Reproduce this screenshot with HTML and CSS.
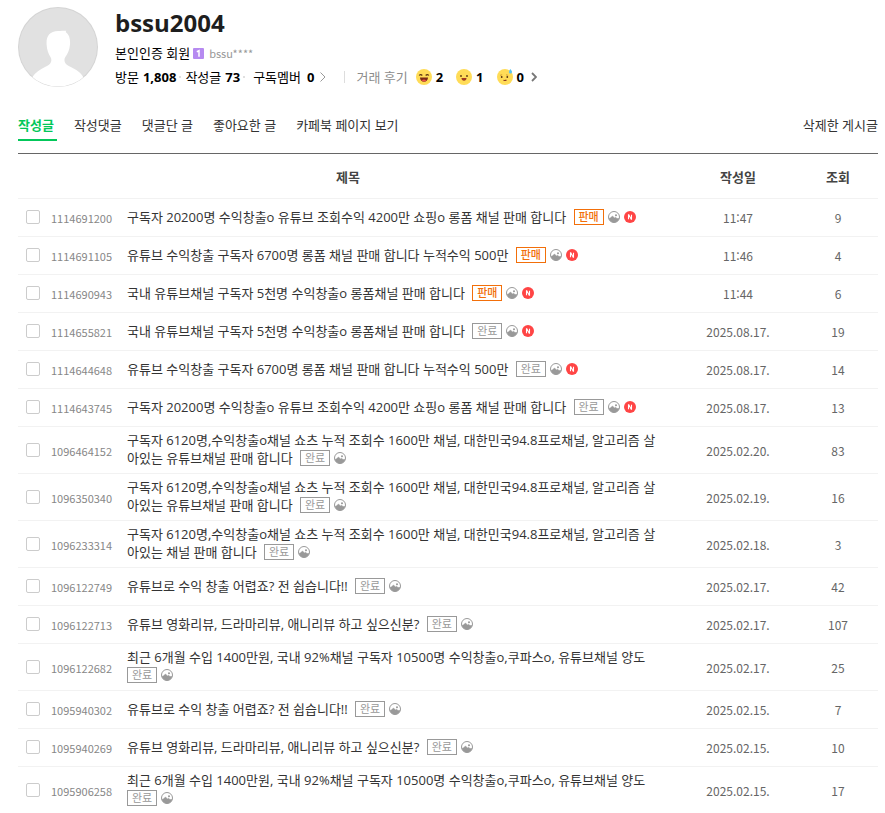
FILE: index.html
```html
<!DOCTYPE html>
<html lang="ko">
<head>
    <meta charset="UTF-8">
    <meta name="viewport" content="width=device-width, initial-scale=1.0">
    <title>bssu2004</title>
    <link rel="stylesheet" href="styles.css">
</head>
<body>
    <!-- 아이콘 -->
    <svg class="icon-defs" width="0" height="0" aria-hidden="true">
        <symbol id="icon-image" viewBox="0 0 12 12">
            <circle cx="6" cy="6" r="5.5" fill="#fff" stroke="#999"/>
            <path d="M1 7.500 2.500 6.800 4.500 5 6.500 7 7.500 6.300 9 7.500 11 7.500A5.200 5.200 0 0 1 1 7.500z" fill="#999" stroke="#999" stroke-width=".5"/>
            <circle cx="8" cy="4.200" r="1" fill="#999"/>
        </symbol>
        <symbol id="icon-new" viewBox="0 0 12 12">
            <circle cx="6" cy="6" r="6" fill="#ff4545"/>
            <path d="M4.500 8.200V3.800h.3L7.200 8.200h.3V3.800" fill="none" stroke="#fff" stroke-width="1.100"/>
        </symbol>
    </svg>

    <div class="container">
        <header class="profile">
            <svg class="avatar" viewBox="0 0 80 80" role="img" aria-label="프로필">
                <defs><clipPath id="avatar-clip"><circle cx="40" cy="40" r="39.5"/></clipPath></defs>
                <circle cx="40" cy="40" r="40" fill="#d4d4d4"/>
                <circle cx="40" cy="40" r="39" fill="#e1e1e1"/>
                <path clip-path="url(#avatar-clip)" fill="#fff" d="M40 24c3.500 0 6-.3 8.200-.2l-.5 1.200c3.600 2.500 4.700 7 4.300 12.500-.4 5-2.200 9.500-4.800 12.800-.8 1.200-1 3.200-.4 4.700 1 2.500 3.200 3.600 6 5 5 2.400 10 5.200 12.800 10.500V81H14V70.500c3.500-5.300 8-8 13-10.500 2.800-1.400 5-2.500 6-5 .6-1.500.4-3.500-.4-4.700-2.300-3.300-3.700-7.800-4-12.800C28 29.500 31.500 24.300 40 24z"/>
            </svg>
            <div class="profile-info">
                <h1>bssu2004</h1>
                <div class="member">
                    <span>본인인증 회원</span>
                    <svg class="level" viewBox="0 0 11 11" aria-hidden="true">
                        <rect width="11" height="11" rx="1" fill="#b68af0"/>
                        <path d="M3.800 3.700 6 2.700v6" fill="none" stroke="#fff" stroke-width="1.500"/>
                    </svg>
                    <span class="member-id">bssu****</span>
                </div>
                <div class="stats">
                    <span class="stat">방문 <strong>1,808</strong></span>
                    <span class="dot"></span>
                    <span class="stat">작성글 <strong>73</strong></span>
                    <span class="dot"></span>
                    <a href="#" class="stat subscribe">구독멤버 <strong>0</strong>
                        <svg width="6" height="10" viewBox="0 0 6 10" aria-hidden="true"><path d="M.5.500 5 5 .5 9.500" fill="none" stroke="#999"/></svg>
                    </a>
                    <a href="#" class="review">
                        <span>거래 후기</span>
                        <span class="face">
                            <svg viewBox="0 0 16 16" aria-hidden="true">
                                <circle cx="8" cy="8" r="8" fill="#ffdc57"/>
                                <path d="M3.200 6.500Q4.700 4.600 6.300 6.500M9.700 6.500Q11.300 4.600 12.800 6.500" fill="none" stroke="#5b3413" stroke-width="1.200"/>
                                <path d="M4 8.500h8c0 2.500-1.600 4.200-4 4.200S4 11 4 8.500z" fill="#7a2a16"/>
                                <path d="M5.700 11.300q2.300-1.400 4.600 0-1 1.300-2.300 1.300t-2.300-1.300z" fill="#f0524b"/>
                            </svg>
                            <strong>2</strong>
                        </span>
                        <span class="face">
                            <svg viewBox="0 0 16 16" aria-hidden="true">
                                <circle cx="8" cy="8" r="8" fill="#ffdc57"/>
                                <circle cx="5" cy="7" r=".9" fill="#5b3413"/>
                                <circle cx="11" cy="7" r=".9" fill="#5b3413"/>
                                <path d="M5.500 8.900h5c0 1.800-1 2.800-2.500 2.800S5.500 10.700 5.500 8.900z" fill="#a03a22"/>
                            </svg>
                            <strong>1</strong>
                        </span>
                        <span class="face">
                            <svg viewBox="0 0 16 16" aria-hidden="true">
                                <circle cx="8" cy="8" r="8" fill="#ffdc57"/>
                                <path d="M3 6.300 5.200 5.800M9 5.800l2.200.5" stroke="#c89328" stroke-width=".8"/>
                                <circle cx="4.700" cy="8" r=".9" fill="#5b3413"/>
                                <circle cx="10.300" cy="8" r=".9" fill="#5b3413"/>
                                <path d="M6.500 11.300q1.500.500 3-.3" fill="none" stroke="#8d3a20" stroke-width="1.200"/>
                                <path d="M13.300 0q2.400 2.400 1.400 3.900-1.200 1.100-2.600 0Q11.300 2.500 13.300 0z" fill="#57c4f5"/>
                            </svg>
                            <strong>0</strong>
                        </span>
                        <svg width="6" height="10" viewBox="0 0 6 10" aria-hidden="true"><path d="M1 1l4 4-4 4" fill="none" stroke="#777" stroke-width="1.800"/></svg>
                    </a>
                </div>
            </div>
        </header>

        <nav class="tabs">
            <a href="#" class="tab active">작성글</a>
            <a href="#" class="tab">작성댓글</a>
            <a href="#" class="tab">댓글단 글</a>
            <a href="#" class="tab">좋아요한 글</a>
            <a href="#" class="tab">카페북 페이지 보기</a>
            <a href="#" class="deleted">삭제한 게시글</a>
        </nav>

        <table class="articles">
            <colgroup>
                <col class="col-id">
                <col>
                <col class="col-date">
                <col class="col-view">
            </colgroup>
            <thead>
                <tr>
                    <th colspan="2" scope="col">제목</th>
                    <th scope="col">작성일</th>
                    <th scope="col">조회</th>
                </tr>
            </thead>
            <tbody>
                <tr>
                    <td><div class="check"><input type="checkbox" id="a1"><label for="a1">1114691200</label></div></td>
                    <td class="title"><a href="#">구독자 20200명 수익창출o 유튜브 조회수익 4200만 쇼핑o 롱폼 채널 판매 합니다</a> <span class="marks"><span class="badge sale">판매</span><svg class="icon"><use href="#icon-image"/></svg><svg class="icon"><use href="#icon-new"/></svg></span></td>
                    <td>11:47</td>
                    <td>9</td>
                </tr>
                <tr>
                    <td><div class="check"><input type="checkbox" id="a2"><label for="a2">1114691105</label></div></td>
                    <td class="title"><a href="#">유튜브 수익창출 구독자 6700명 롱폼 채널 판매 합니다 누적수익 500만</a> <span class="marks"><span class="badge sale">판매</span><svg class="icon"><use href="#icon-image"/></svg><svg class="icon"><use href="#icon-new"/></svg></span></td>
                    <td>11:46</td>
                    <td>4</td>
                </tr>
                <tr>
                    <td><div class="check"><input type="checkbox" id="a3"><label for="a3">1114690943</label></div></td>
                    <td class="title"><a href="#">국내 유튜브채널 구독자 5천명 수익창출o 롱폼채널 판매 합니다</a> <span class="marks"><span class="badge sale">판매</span><svg class="icon"><use href="#icon-image"/></svg><svg class="icon"><use href="#icon-new"/></svg></span></td>
                    <td>11:44</td>
                    <td>6</td>
                </tr>
                <tr>
                    <td><div class="check"><input type="checkbox" id="a4"><label for="a4">1114655821</label></div></td>
                    <td class="title"><a href="#">국내 유튜브채널 구독자 5천명 수익창출o 롱폼채널 판매 합니다</a> <span class="marks"><span class="badge">완료</span><svg class="icon"><use href="#icon-image"/></svg><svg class="icon"><use href="#icon-new"/></svg></span></td>
                    <td>2025.08.17.</td>
                    <td>19</td>
                </tr>
                <tr>
                    <td><div class="check"><input type="checkbox" id="a5"><label for="a5">1114644648</label></div></td>
                    <td class="title"><a href="#">유튜브 수익창출 구독자 6700명 롱폼 채널 판매 합니다 누적수익 500만</a> <span class="marks"><span class="badge">완료</span><svg class="icon"><use href="#icon-image"/></svg><svg class="icon"><use href="#icon-new"/></svg></span></td>
                    <td>2025.08.17.</td>
                    <td>14</td>
                </tr>
                <tr>
                    <td><div class="check"><input type="checkbox" id="a6"><label for="a6">1114643745</label></div></td>
                    <td class="title"><a href="#">구독자 20200명 수익창출o 유튜브 조회수익 4200만 쇼핑o 롱폼 채널 판매 합니다</a> <span class="marks"><span class="badge">완료</span><svg class="icon"><use href="#icon-image"/></svg><svg class="icon"><use href="#icon-new"/></svg></span></td>
                    <td>2025.08.17.</td>
                    <td>13</td>
                </tr>
                <tr>
                    <td><div class="check"><input type="checkbox" id="a7"><label for="a7">1096464152</label></div></td>
                    <td class="title"><a href="#">구독자 6120명,수익창출o채널 쇼츠 누적 조회수 1600만 채널, 대한민국94.8프로채널, 알고리즘 살아있는 유튜브채널 판매 합니다</a> <span class="marks"><span class="badge">완료</span><svg class="icon"><use href="#icon-image"/></svg></span></td>
                    <td>2025.02.20.</td>
                    <td>83</td>
                </tr>
                <tr>
                    <td><div class="check"><input type="checkbox" id="a8"><label for="a8">1096350340</label></div></td>
                    <td class="title"><a href="#">구독자 6120명,수익창출o채널 쇼츠 누적 조회수 1600만 채널, 대한민국94.8프로채널, 알고리즘 살아있는 유튜브채널 판매 합니다</a> <span class="marks"><span class="badge">완료</span><svg class="icon"><use href="#icon-image"/></svg></span></td>
                    <td>2025.02.19.</td>
                    <td>16</td>
                </tr>
                <tr>
                    <td><div class="check"><input type="checkbox" id="a9"><label for="a9">1096233314</label></div></td>
                    <td class="title"><a href="#">구독자 6120명,수익창출o채널 쇼츠 누적 조회수 1600만 채널, 대한민국94.8프로채널, 알고리즘 살아있는 채널 판매 합니다</a> <span class="marks"><span class="badge">완료</span><svg class="icon"><use href="#icon-image"/></svg></span></td>
                    <td>2025.02.18.</td>
                    <td>3</td>
                </tr>
                <tr>
                    <td><div class="check"><input type="checkbox" id="a10"><label for="a10">1096122749</label></div></td>
                    <td class="title"><a href="#">유튜브로 수익 창출 어렵죠? 전 쉽습니다!!</a> <span class="marks"><span class="badge">완료</span><svg class="icon"><use href="#icon-image"/></svg></span></td>
                    <td>2025.02.17.</td>
                    <td>42</td>
                </tr>
                <tr>
                    <td><div class="check"><input type="checkbox" id="a11"><label for="a11">1096122713</label></div></td>
                    <td class="title"><a href="#">유튜브 영화리뷰, 드라마리뷰, 애니리뷰 하고 싶으신분?</a> <span class="marks"><span class="badge">완료</span><svg class="icon"><use href="#icon-image"/></svg></span></td>
                    <td>2025.02.17.</td>
                    <td>107</td>
                </tr>
                <tr>
                    <td><div class="check"><input type="checkbox" id="a12"><label for="a12">1096122682</label></div></td>
                    <td class="title"><a href="#">최근 6개월 수입 1400만원, 국내 92%채널 구독자 10500명 수익창출o,쿠파스o, 유튜브채널 양도</a> <span class="marks"><span class="badge">완료</span><svg class="icon"><use href="#icon-image"/></svg></span></td>
                    <td>2025.02.17.</td>
                    <td>25</td>
                </tr>
                <tr>
                    <td><div class="check"><input type="checkbox" id="a13"><label for="a13">1095940302</label></div></td>
                    <td class="title"><a href="#">유튜브로 수익 창출 어렵죠? 전 쉽습니다!!</a> <span class="marks"><span class="badge">완료</span><svg class="icon"><use href="#icon-image"/></svg></span></td>
                    <td>2025.02.15.</td>
                    <td>7</td>
                </tr>
                <tr>
                    <td><div class="check"><input type="checkbox" id="a14"><label for="a14">1095940269</label></div></td>
                    <td class="title"><a href="#">유튜브 영화리뷰, 드라마리뷰, 애니리뷰 하고 싶으신분?</a> <span class="marks"><span class="badge">완료</span><svg class="icon"><use href="#icon-image"/></svg></span></td>
                    <td>2025.02.15.</td>
                    <td>10</td>
                </tr>
                <tr>
                    <td><div class="check"><input type="checkbox" id="a15"><label for="a15">1095906258</label></div></td>
                    <td class="title"><a href="#">최근 6개월 수입 1400만원, 국내 92%채널 구독자 10500명 수익창출o,쿠파스o, 유튜브채널 양도</a> <span class="marks"><span class="badge">완료</span><svg class="icon"><use href="#icon-image"/></svg></span></td>
                    <td>2025.02.15.</td>
                    <td>17</td>
                </tr>
            </tbody>
        </table>
    </div>
</body>
</html>
```
FILE: styles.css
```css
* {
    box-sizing: border-box;
}

body {
    margin: 0;
    background-color: #fff;
    color: #333;
    font-family: "Open Sans", "Noto Sans CJK KR", sans-serif;
    font-size: 13px;
    line-height: 18px;
}

a {
    color: inherit;
    text-decoration: none;
}

a:hover {
    text-decoration: underline;
}

.icon-defs {
    position: absolute;
}

.container {
    padding: 7px 7px 0 18px;
}

/* 프로필 */
.profile {
    display: flex;
    gap: 17px;
    color: #000;
}

.avatar {
    flex: none;
    width: 80px;
    height: 80px;
}

h1 {
    margin: 0;
    color: #1e1e1e;
    font-size: 24px;
    line-height: 32px;
}

.member {
    display: flex;
    align-items: center;
    gap: 3px;
    height: 24px;
    margin-top: 2px;
}

.level {
    width: 11px;
    height: 11px;
}

.member-id {
    padding-left: 2px;
    color: #979797;
    font-family: "Noto Sans CJK KR", sans-serif;
    font-size: 11px;
}

.stats,
.stat,
.review,
.face {
    display: flex;
    align-items: center;
}

.stats {
    height: 22px;
    padding-top: 2px;
}

.stat {
    gap: 4px;
}

.dot {
    width: 2px;
    height: 2px;
    margin: 0 4px 0 3px;
    background-color: #e0e0e0;
}

.subscribe {
    gap: 6px;
    margin-left: 4px;
}

.review {
    gap: 13px;
    margin-left: 18px;
    padding-left: 12px;
    background: linear-gradient(#ddd, #ddd) left center / 1px 12px no-repeat;
}

.review > span:first-child {
    margin-right: -5px;
    color: #8c8c8c;
}

.face {
    gap: 4px;
}

.face svg {
    width: 16px;
    height: 16px;
}

.review > svg {
    margin-left: -6px;
}

/* 탭 메뉴 */
.tabs {
    display: flex;
    gap: 17px;
    height: 67px;
    padding-top: 27px;
    border-bottom: 1px solid #666;
}

.tab {
    height: 27px;
    padding: 2px 3px 0 0;
}

.tab.active {
    border-bottom: 2px solid #03c75a;
    color: #03c75a;
    font-weight: bold;
}

.deleted {
    margin-left: auto;
    padding-top: 2px;
}

/* 게시글 목록 */
.articles {
    width: 100%;
    border-spacing: 0;
    table-layout: fixed;
}

.col-id {
    width: 103px;
}

.col-date {
    width: 120px;
}

.col-view {
    width: 80px;
}

th {
    height: 45px;
    padding: 2px 0 0;
    border-bottom: 1px solid #f2f2f2;
    color: #444;
}

td {
    height: 38px;
    padding: 1px 0 0;
    border-bottom: 1px solid #f2f2f2;
    color: #666;
    font-family: "Noto Sans CJK KR", sans-serif;
    font-size: 12px;
    text-align: center;
}

.check {
    display: flex;
    align-items: center;
    gap: 11px;
    padding-left: 8px;
    color: #878787;
    font-size: 11px;
}

.check input {
    appearance: none;
    width: 14px;
    height: 14px;
    margin: 0 0 2px;
    border: 1px solid #ccc;
    border-radius: 2px;
    background-color: #fff;
}

.check input:checked {
    background-color: #03c75a;
    border-color: #03c75a;
}

td.title {
    padding: 4px 18px 6px 6px;
    color: #333;
    font-family: "Open Sans", "Noto Sans CJK KR", sans-serif;
    font-size: 13px;
    text-align: left;
    word-break: break-all;
}

.title a {
    padding-right: 4px;
}

.marks {
    display: inline-flex;
    align-items: center;
    gap: 4px;
    height: 18px;
    vertical-align: top;
}

.badge {
    width: 30px;
    height: 16px;
    border: 1px solid #999;
    color: #999;
    font-size: 11px;
    line-height: 14px;
    text-align: center;
}

.badge.sale {
    border-color: #f26f0a;
    color: #f26f0a;
    font-weight: 500;
}

.icon {
    width: 12px;
    height: 12px;
}
```
